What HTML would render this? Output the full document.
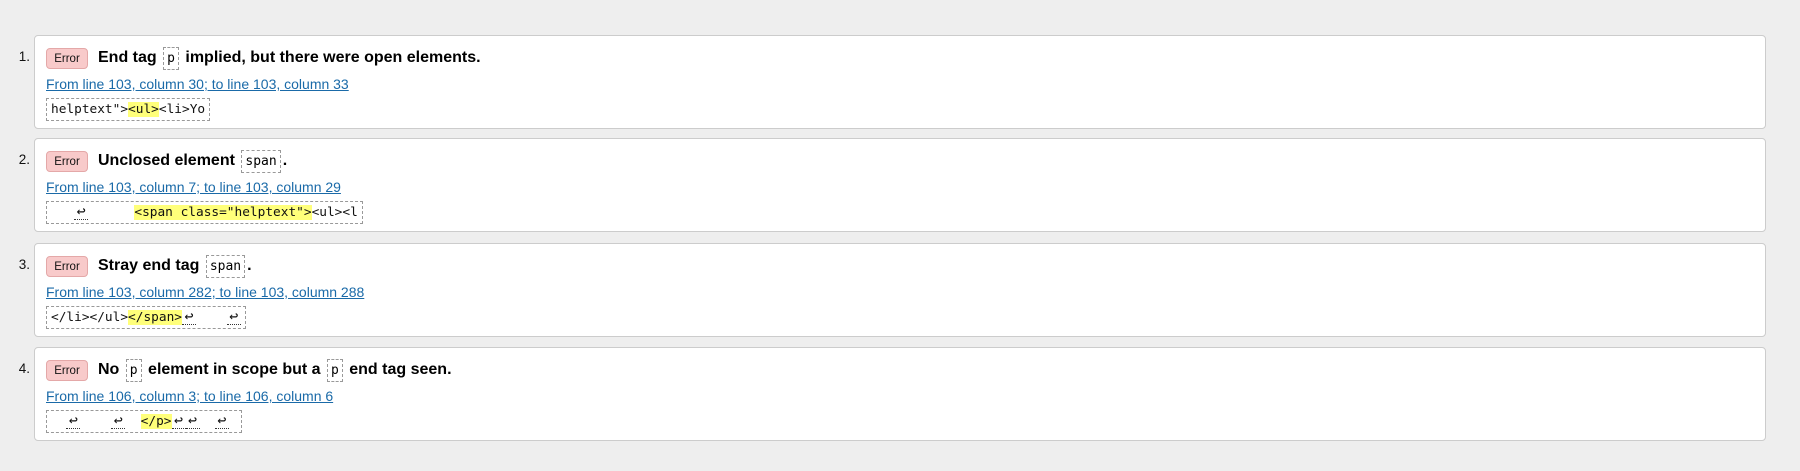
<!DOCTYPE html>
<html><head><meta charset="utf-8"><style>
body{margin:0;background:#eee;width:1800px;height:471px;font-family:"Liberation Sans",Arial,sans-serif;position:relative;overflow:hidden}
.n{position:absolute;left:14px;width:16px;text-align:right;font-size:13.5px;color:#111}
.box{position:absolute;left:34px;width:1730px;height:92px;background:#fff;border:1px solid #ccc;border-radius:4px}
.badge{position:absolute;left:11px;top:12px;width:40px;height:19px;background:#f8caca;border:1px solid #e4a8a8;border-radius:4px;font-size:11.5px;line-height:21px;text-align:center;color:#111}
.t{position:absolute;left:63px;top:10px;font-size:16px;font-weight:bold;color:#000;white-space:nowrap;line-height:24px}
.t code{font-family:"DejaVu Sans Mono","Liberation Mono",monospace;font-weight:normal;font-size:13px;border:1px dashed #999;padding:3px 3px;margin:0 2px}
.l{position:absolute;left:11px;top:40px;font-size:14px;color:#1a6aa8;text-decoration:underline;white-space:nowrap}
.c{position:absolute;left:11px;top:62px;height:21px;border:1px dashed #999;font-family:"DejaVu Sans Mono","Liberation Mono",monospace;font-size:12.8px;line-height:22px;padding:0 4px;white-space:pre;color:#111}
.c b{font-weight:normal;background:#ffff7a}
.c i{font-style:normal;border-bottom:1px dotted #333;font-size:15px;line-height:15px;display:inline-block;width:14px;text-align:center}
</style></head><body>
<div class="n" style="top:49px">1.</div>
<div class="box" style="top:35px"><div class="badge">Error</div><div class="t">End tag <code>p</code> implied, but there were open elements.</div><div class="l">From line 103, column 30; to line 103, column 33</div><div class="c">helptext"&gt;<b>&lt;ul&gt;</b>&lt;li&gt;Yo</div></div>
<div class="n" style="top:152px">2.</div>
<div class="box" style="top:138px"><div class="badge">Error</div><div class="t">Unclosed element <code>span</code>.</div><div class="l">From line 103, column 7; to line 103, column 29</div><div class="c">   <i>↩</i>      <b>&lt;span class="helptext"&gt;</b>&lt;ul&gt;&lt;l</div></div>
<div class="n" style="top:257px">3.</div>
<div class="box" style="top:243px"><div class="badge">Error</div><div class="t">Stray end tag <code>span</code>.</div><div class="l">From line 103, column 282; to line 103, column 288</div><div class="c">&lt;/li&gt;&lt;/ul&gt;<b>&lt;/span&gt;</b><i>↩</i>    <i>↩</i></div></div>
<div class="n" style="top:361px">4.</div>
<div class="box" style="top:347px"><div class="badge">Error</div><div class="t">No <code>p</code> element in scope but a <code>p</code> end tag seen.</div><div class="l">From line 106, column 3; to line 106, column 6</div><div class="c">  <i>↩</i>    <i>↩</i>  <b>&lt;/p&gt;</b><i>↩</i><i>↩</i>  <i>↩</i> </div></div>
</body></html>
